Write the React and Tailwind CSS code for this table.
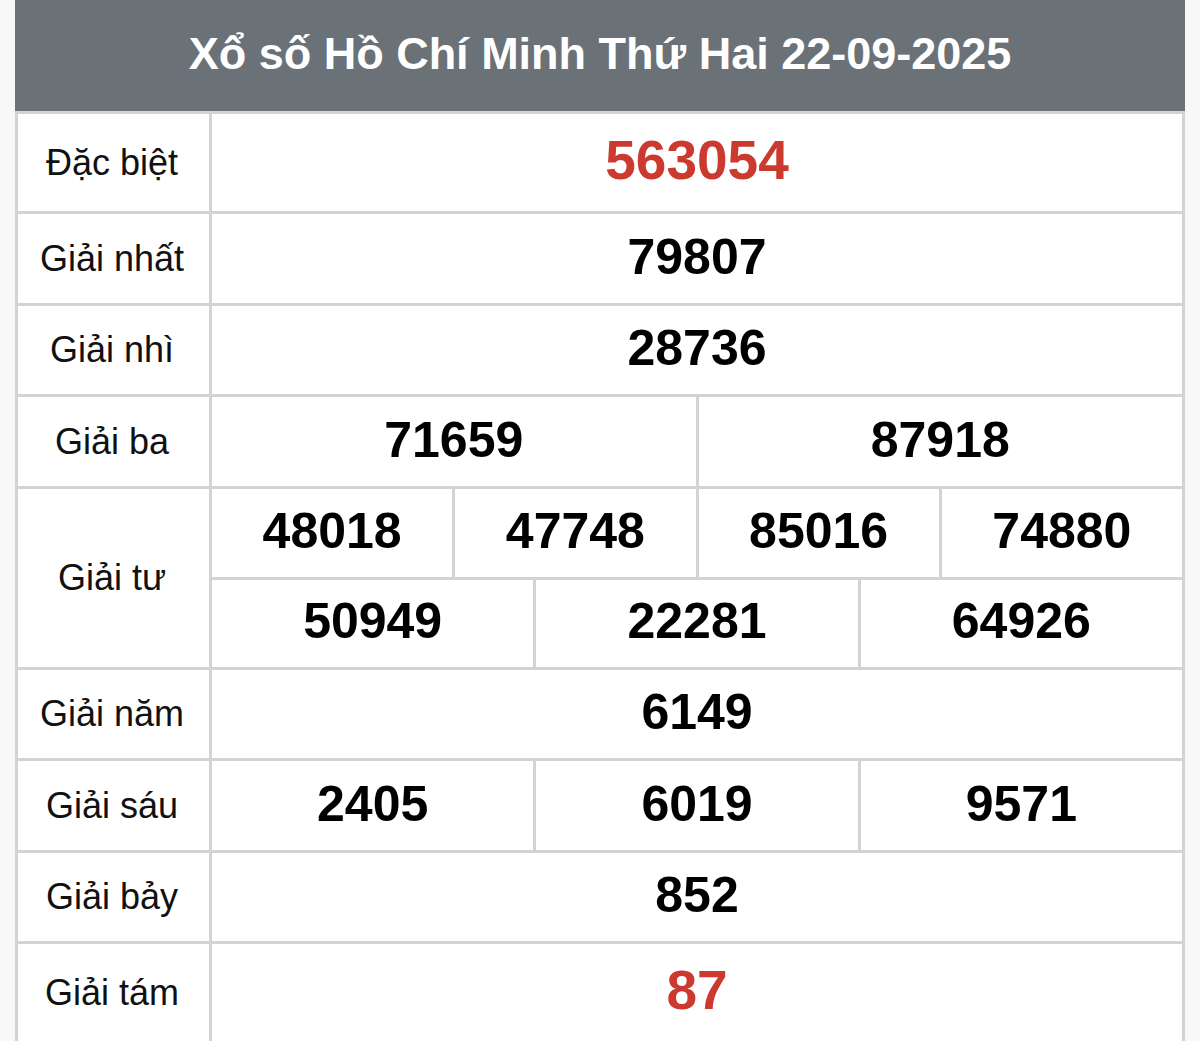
import React from 'react';

const rows = [
    { label: 'Đặc biệt', lines: [['563054']], red: true, h: 'h-[100px]', big: true },
    { label: 'Giải nhất', lines: [['79807']], h: 'h-[92px]' },
    { label: 'Giải nhì', lines: [['28736']], h: 'h-[91px]' },
    { label: 'Giải ba', lines: [['71659', '87918']], h: 'h-[92px]' },
    { label: 'Giải tư', lines: [['48018', '47748', '85016', '74880'], ['50949', '22281', '64926']], h: 'h-[181px]' },
    { label: 'Giải năm', lines: [['6149']], h: 'h-[91px]' },
    { label: 'Giải sáu', lines: [['2405', '6019', '9571']], h: 'h-[92px]' },
    { label: 'Giải bảy', lines: [['852']], h: 'h-[91px]' },
    { label: 'Giải tám', lines: [['87']], red: true, h: 'h-[100px]', big: true },
];

const PrizeRow = ({ row }) => (
    <div className={`flex ${row.h} border-b-[3px] border-[#d3d3d3]`}>
        <div className="flex w-[194px] shrink-0 items-center justify-center border-r-[3px] border-[#d3d3d3] pr-[3px] text-[36px] text-[#111]">
            {row.label}
        </div>
        <div className="flex flex-1 flex-col">
            {row.lines.map((nums, i) => (
                <div
                    key={i}
                    className={`flex flex-1 ${i > 0 ? 'border-t-[3px] border-[#d3d3d3]' : ''}`}
                >
                    {nums.map((n, j) => (
                        <div
                            key={j}
                            className={`flex flex-1 items-center justify-center pb-[4px] font-bold leading-none ${j > 0 ? 'border-l-[3px] border-[#d3d3d3]' : ''} ${row.red ? 'text-[#cc3a2f]' : 'text-black'} ${row.big ? 'text-[55px]' : 'text-[50px]'}`}
                        >
                            {n}
                        </div>
                    ))}
                </div>
            ))}
        </div>
    </div>
);

const App = () => {
    return (
        <div className="min-h-screen bg-[#f8f8f8] px-[15px] font-['Liberation_Sans',Arial,sans-serif]">
            <div className="bg-white">
                <div className="flex h-[111px] items-center justify-center bg-[#6a7278] pb-[4px] text-[45px] font-bold text-white">
                    Xổ số Hồ Chí Minh Thứ Hai 22-09-2025
                </div>
                <div className="border-x-[3px] border-t-[3px] border-[#d3d3d3]">
                    {rows.map((row) => (
                        <PrizeRow key={row.label} row={row} />
                    ))}
                </div>
            </div>
        </div>
    );
};

export default App;
